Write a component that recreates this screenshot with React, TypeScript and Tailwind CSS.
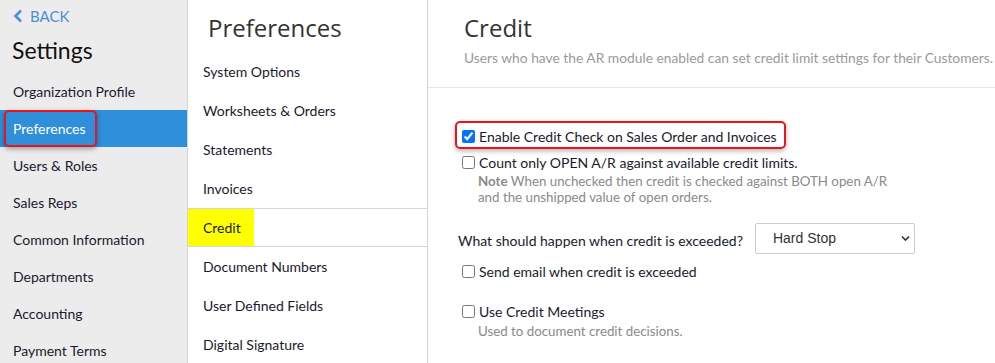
import React from "react";

const sideItems = [
  "Organization Profile",
  "Preferences",
  "Users & Roles",
  "Sales Reps",
  "Common Information",
  "Departments",
  "Accounting",
  "Payment Terms",
];

const midItems = [
  "System Options",
  "Worksheets & Orders",
  "Statements",
  "Invoices",
  "Credit",
  "Document Numbers",
  "User Defined Fields",
  "Digital Signature",
];

function Box({ checked }: { checked?: boolean }) {
  return (
    <input
      type="checkbox"
      defaultChecked={checked}
      className="w-[13px] h-[13px] m-0 shrink-0 accent-[#0075ff]"
    />
  );
}

export default function App() {
  return (
    <div
      className="flex w-[995px] h-[363px] overflow-hidden bg-white text-[#222]"
      style={{ fontFamily: "Lato, 'Open Sans', sans-serif" }}
    >
      {/* Sidebar */}
      <div className="relative w-[188px] shrink-0 bg-[#ececec] border-r border-[#d4d4d4] flex flex-col">
        <div className="shrink-0 flex items-center gap-[7px] pl-[13px] pt-[5px] h-[27px] text-[#4a8fd6] text-[15px]">
          <svg width="10" height="14" viewBox="0 0 10 14">
            <path d="M8 1.5 L2.5 7 L8 12.5" fill="none" stroke="#4a8fd6" strokeWidth="2.6" />
          </svg>
          <span>BACK</span>
        </div>
        <div className="shrink-0 pl-[12px] h-[46px] flex items-center text-[23px] text-[#111]">Settings</div>
        {sideItems.map((t) => (
          <div
            key={t}
            className={
              "h-[37px] flex items-center pl-[13px] text-[14px] shrink-0 " +
              (t === "Preferences" ? "bg-[#2f8fda] text-white" : "text-[#1a1a2e]")
            }
          >
            {t}
          </div>
        ))}
        <div className="absolute left-[4px] top-[110px] w-[93px] h-[37px] rounded-[5px] border-2 border-[#e8141c] shadow-[0_2px_5px_rgba(0,0,0,0.35)]" />
      </div>

      {/* Middle column */}
      <div className="w-[240px] shrink-0 border-r border-[#d4d4d4] flex flex-col">
        <div
          className="shrink-0 h-[52px] pl-[20px] pt-[11px] text-[24px] leading-[34px] text-[#333]"
          style={{ fontFamily: "'Open Sans', sans-serif" }}
        >
          Preferences
        </div>
        {midItems.map((t) => (
          <div
            key={t}
            className={
              "h-[39px] flex items-center text-[14px] shrink-0 text-[#1a1a2e] " +
              (t === "Credit" ? "border-y border-[#d6d6d6]" : "")
            }
          >
            {t === "Credit" ? (
              <div className="h-full w-[66px] bg-[#ffff00] flex items-center pl-[15px]">{t}</div>
            ) : (
              <div className="pl-[15px]">{t}</div>
            )}
          </div>
        ))}
      </div>

      {/* Content */}
      <div className="flex-1 flex flex-col">
        <div className="shrink-0 pl-[36px] h-[88px] border-b border-[#e6e6e6]">
          <div
            className="pt-[11px] text-[24px] text-[#333] leading-[34px]"
            style={{ fontFamily: "'Open Sans', sans-serif" }}
          >
            Credit
          </div>
          <div className="mt-[3px] text-[13.8px] text-[#9a9a9a]">
            Users who have the AR module enabled can set credit limit settings for their Customers.
          </div>
        </div>
        <div className="pl-[34px] pt-[38px] text-[14px] text-[#1a1a2e]">
          <div className="relative flex items-center gap-[4px] h-[20px]">
            <Box checked />
            <span>Enable Credit Check on Sales Order and Invoices</span>
            <div className="absolute left-[-7px] top-[-5px] w-[331px] h-[28px] rounded-[5px] border-2 border-[#e8141c] shadow-[0_2px_5px_rgba(0,0,0,0.3)]" />
          </div>
          <div className="flex items-center gap-[4px] h-[20px] mt-[6px]">
            <Box />
            <span>Count only OPEN A/R against available credit limits.</span>
          </div>
          <div className="pl-[16px] text-[13.3px] text-[#8a8a8a] leading-[16px] mt-[1px]">
            <div>
              <span className="font-bold">Note</span> When unchecked then credit is checked against BOTH open A/R
            </div>
            <div>and the unshipped value of open orders.</div>
          </div>
          <div className="flex items-center gap-[12px] mt-[18px] -ml-[4px]">
            <span className="relative top-[2px]">What should happen when credit is exceeded?</span>
            <div
              className="relative w-[160px] h-[31px] border border-[#ccc] rounded-[2px] flex items-center pl-[17px] text-[#333]"
              style={{ fontFamily: "'Liberation Sans', Arial, sans-serif" }}
            >
              Hard Stop
              <svg className="absolute right-[4px] top-[11px]" width="9" height="7" viewBox="0 0 9 7">
                <path d="M1 1.5 L4.5 5 L8 1.5" fill="none" stroke="#333" strokeWidth="1.6" />
              </svg>
            </div>
          </div>
          <div className="flex items-center gap-[4px] h-[20px] mt-[7px]">
            <Box />
            <span>Send email when credit is exceeded</span>
          </div>
          <div className="flex items-center gap-[4px] h-[20px] mt-[20px]">
            <Box />
            <span>Use Credit Meetings</span>
          </div>
          <div className="pl-[16px] text-[13.3px] text-[#8a8a8a] leading-[16px] mt-[2px]">
            Used to document credit decisions.
          </div>
        </div>
      </div>
    </div>
  );
}
